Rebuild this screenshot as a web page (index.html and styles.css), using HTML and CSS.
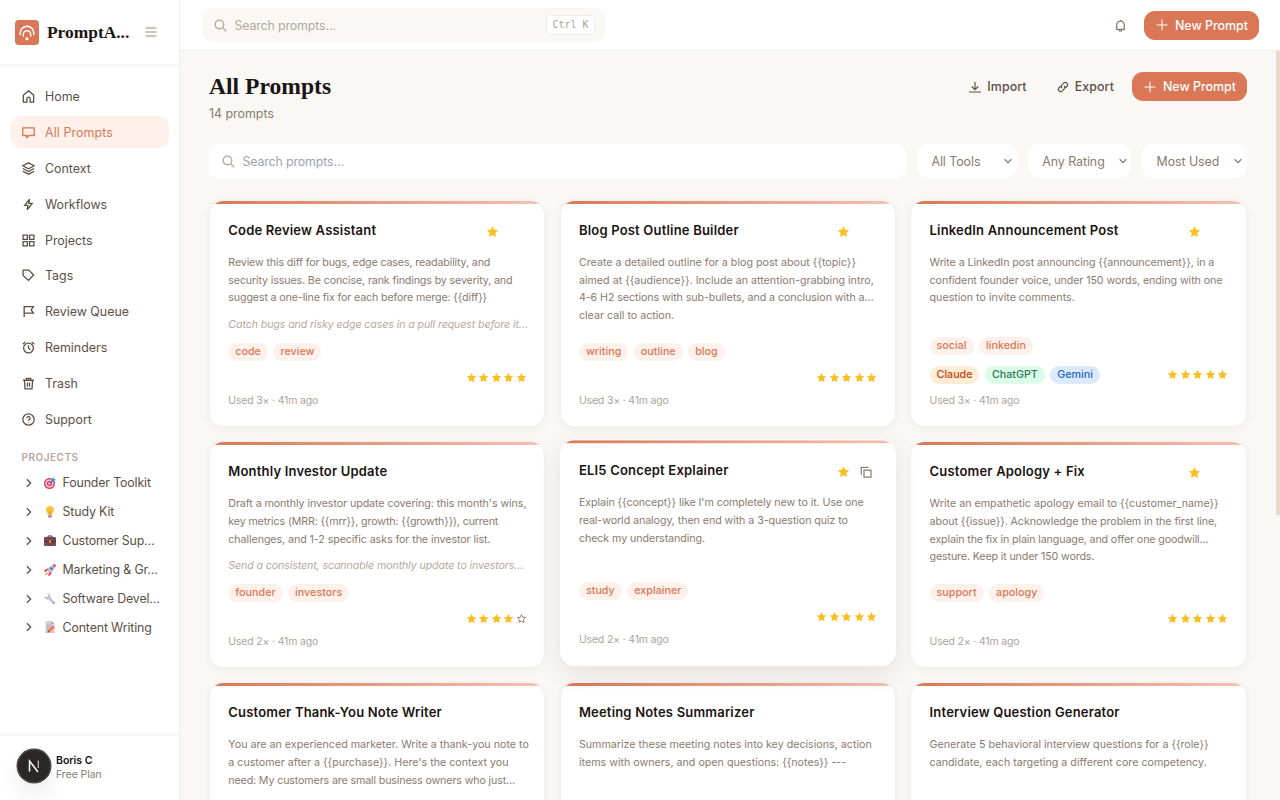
FILE: index.html
```html
<!DOCTYPE html>
<html lang="en">
<head>
<meta charset="UTF-8">
<title>All Prompts</title>
<link rel="stylesheet" href="styles.css">
</head>
<body>
<svg class="sprite">
<symbol id="home" viewBox="0 0 24 24"><path d="M2.500 9.500 12 1.500l9.500 8V22.500h-6.500v-6.300a3 3 0 0 0-6 0v6.300H2.500z"/></symbol>
<symbol id="chat" viewBox="0 0 24 24"><path d="M1.500 3.500h21v14h-9.500L9 21.500v-4H1.500z"/></symbol>
<symbol id="layers" viewBox="0 0 24 24"><path d="M12 1.500 22.500 7 12 12.500 1.500 7zM1.500 12 12 17.500 22.500 12M1.500 17 12 22.500 22.500 17"/></symbol>
<symbol id="bolt" viewBox="0 0 24 24"><path d="M14 2 5 13.500h6L9.500 22l9.500-12h-6.500z"/></symbol>
<symbol id="grid" viewBox="0 0 24 24"><path d="M2 2h8v8H2zM14 2h8v8h-8zM2 14h8v8H2zM14 14h8v8h-8z"/></symbol>
<symbol id="tag" viewBox="0 0 24 24"><path d="M2 2h10.500l9 9-9.500 10L2 12zM7 7h.5"/></symbol>
<symbol id="flag" viewBox="0 0 24 24"><path d="M4 22V3h17l-4 6 4 6H4"/></symbol>
<symbol id="clock" viewBox="0 0 24 24"><circle cx="12" cy="13" r="9"/><path d="M12 8v5l3 3M1.500 6 6 2M22.500 6 18 2"/></symbol>
<symbol id="trash" viewBox="0 0 24 24"><path d="M2 6h20M8 6V2.500h8V6M4.500 6l1 16h13l1-16M10 10v8M14 10v8"/></symbol>
<symbol id="help" viewBox="0 0 24 24"><circle cx="12" cy="12" r="10.500"/><path d="M9 9.500a3 3 0 1 1 4.500 2.600c-1 .6-1.500 1-1.500 2M12 17v.8"/></symbol>
<symbol id="search" viewBox="0 0 24 24"><circle cx="10" cy="10" r="8"/><path d="m16 16 6.500 6.500"/></symbol>
<symbol id="right" viewBox="0 0 24 24"><path d="m7 3 9 9-9 9"/></symbol>
<symbol id="down" viewBox="0 0 24 24"><path d="m2 7 10 10L22 7"/></symbol>
<symbol id="plus" viewBox="0 0 24 24"><path d="M12 1v22M1 12h22"/></symbol>
<symbol id="menu" viewBox="0 0 24 24"><path d="M1 4h22M1 12h22M1 20h22"/></symbol>
<symbol id="bell" viewBox="0 0 24 24"><path d="M3.500 19h17M5 19v-8a7 7 0 0 1 14 0v8M12 1.500V4M9 19.500a3 3 0 0 0 6 0"/></symbol>
<symbol id="import" viewBox="0 0 24 24"><path d="M12 2v15M5.500 11l6.500 6.500 6.500-6.500M0 22h24"/></symbol>
<symbol id="link" viewBox="0 0 24 24"><path d="M10 14a4.500 4.500 0 0 1 0-6.300l4-4a4.500 4.500 0 0 1 6.300 6.300L17 13.500M14 10a4.500 4.500 0 0 1 0 6.300l-4 4A4.500 4.500 0 0 1 3.700 14L7 10.500"/></symbol>
<symbol id="copy" viewBox="0 0 24 24"><path d="M8 8h14v14H8zM2.500 17V2.500H17"/></symbol>
<symbol id="star" viewBox="0 0 24 24"><path d="m12 1.800 3.200 6.800 7.300.9-5.400 5.100 1.400 7.400L12 18.400 5.500 22l1.400-7.400L1.500 9.500l7.300-.9z"/></symbol>
<symbol id="star-empty" viewBox="0 0 24 24"><path d="m12 3.500 2.600 5.700 6.300.8-4.600 4.300 1.200 6.200L12 17.500l-5.500 3 1.200-6.200L3.100 10l6.300-.8z"/></symbol>
</svg>

<div class="app">
<aside class="sidebar">
<div class="brand">
<svg class="logo" viewBox="0 0 24 25"><rect width="24" height="25" rx="4" fill="#da7756"/><path d="M5.200 14.500v-1.500a6.800 6.800 0 0 1 13.600 0v1.500M8.300 16v-1.500a3.700 3.700 0 0 1 7.400 0V16" fill="none" stroke="#fff" stroke-width="1.500" stroke-linecap="round"/><circle cx="12" cy="18.800" r="1.500" fill="#fff"/></svg>
<span class="brand-name">PromptA...</span>
<svg class="icon menu"><use href="#menu"/></svg>
</div>
<nav class="nav">
<a class="nav-item"><svg class="icon"><use href="#home"/></svg>Home</a>
<a class="nav-item active"><svg class="icon"><use href="#chat"/></svg>All Prompts</a>
<a class="nav-item"><svg class="icon"><use href="#layers"/></svg>Context</a>
<a class="nav-item"><svg class="icon"><use href="#bolt"/></svg>Workflows</a>
<a class="nav-item"><svg class="icon"><use href="#grid"/></svg>Projects</a>
<a class="nav-item"><svg class="icon"><use href="#tag"/></svg>Tags</a>
<a class="nav-item"><svg class="icon"><use href="#flag"/></svg>Review Queue</a>
<a class="nav-item"><svg class="icon"><use href="#clock"/></svg>Reminders</a>
<a class="nav-item"><svg class="icon"><use href="#trash"/></svg>Trash</a>
<a class="nav-item"><svg class="icon"><use href="#help"/></svg>Support</a>
</nav>
<div class="projects">
<div class="projects-label">PROJECTS</div>
<a class="project"><svg class="icon chevron"><use href="#right"/></svg><svg class="emoji" viewBox="0 0 24 24"><circle cx="11" cy="13" r="11" fill="#e6395f"/><circle cx="11" cy="13" r="8" fill="#f5dce4"/><circle cx="11" cy="13" r="5.500" fill="#e6395f"/><circle cx="11" cy="13" r="2.500" fill="#f5dce4"/><path d="m11 13 7-7" stroke="#256fb5" stroke-width="2"/><path d="m14 6 5-6 1 4 4 1-6 5h-4z" fill="#3b9bea"/></svg>Founder Toolkit</a>
<a class="project"><svg class="icon chevron"><use href="#right"/></svg><svg class="emoji" viewBox="0 0 24 24"><path d="M12 0a8 8 0 0 0-8 8c0 4 4 6 4 10h8c0-4 4-6 4-10a8 8 0 0 0-8-8z" fill="#fdc43f"/><path d="M9 9l3 2 3-2-2 9h-2z" fill="#f49b2c"/><path d="M8 18h8v3l-2 3h-4l-2-3z" fill="#a8a3b0"/></svg>Study Kit</a>
<a class="project"><svg class="icon chevron"><use href="#right"/></svg><svg class="emoji" viewBox="0 0 24 24"><path d="M8 5V2h8v3" fill="none" stroke="#4e3038" stroke-width="2"/><rect y="4" width="24" height="18" rx="2" fill="#79474f"/><path d="M0 12h24v2H0z" fill="#563039"/><rect x="10" y="11" width="4" height="4" fill="#f2a640"/></svg>Customer Sup…</a>
<a class="project"><svg class="icon chevron"><use href="#right"/></svg><svg class="emoji" viewBox="0 0 24 24"><path d="m9 8-7 3-2 5 7-2zM16 15l-3 7-5 2 2-7z" fill="#e6395f"/><path d="M6 13C9 6 15 1 23 1c0 8-5 14-12 17z" fill="#c5bdcf"/><path d="M17 2q3-2 6-1 1 3-1 6z" fill="#e6395f"/><circle cx="15" cy="9" r="2.500" fill="#247fcd"/><path d="m5 16-4 7 7-4z" fill="#f99840"/></svg>Marketing &amp; Gr…</a>
<a class="project"><svg class="icon chevron"><use href="#right"/></svg><svg class="emoji" viewBox="0 0 24 24"><path d="M2 5 5 8l3-1 1-3-3-3c5-1 9 3 7 8l9 9a3 3 0 0 1-4 4l-9-9C4 14 0 10 2 5z" fill="#c9c1d1"/><circle cx="19.500" cy="20" r="1.300" fill="#857b90"/></svg>Software Devel…</a>
<a class="project"><svg class="icon chevron"><use href="#right"/></svg><svg class="emoji" viewBox="0 0 24 24"><path d="M3 0h12l6 6v18H3z" fill="#d4cbe0"/><path d="M15 0v6h6z" fill="#a69bb5"/><path d="M6 8h9M6 12h9M6 16h4" stroke="#a69bb5" stroke-width="1.500"/><path d="m8 18 10-9 4 4-10 9-5 1z" fill="#f47b45"/><path d="m8 18-1 5 5-1z" fill="#a74555"/></svg>Content Writing</a>
</div>
<div class="account">
<svg class="avatar" viewBox="0 0 36 36"><circle cx="18" cy="18" r="17.500" fill="#292827"/><circle cx="18" cy="18" r="16.500" fill="none" stroke="#555250"/><path d="M13.500 23.500V13L22 24" fill="none" stroke="#fff" stroke-width="1.500"/><path d="M22.300 12.500v7.500" stroke="#bbb" stroke-width="1.300"/></svg>
<div class="account-text"><div class="account-name">Boris C</div><div class="account-plan">Free Plan</div></div>
</div>
</aside>

<div class="main">
<header class="topbar">
<div class="top-search"><svg class="icon"><use href="#search"/></svg><span>Search prompts…</span><kbd>Ctrl K</kbd></div>
<div class="top-actions"><svg class="icon bell"><use href="#bell"/></svg><button class="primary"><svg class="icon"><use href="#plus"/></svg>New Prompt</button></div>
</header>
<main class="content">
<div class="heading">
<div><h1>All Prompts</h1><p>14 prompts</p></div>
<div class="heading-actions">
<button class="ghost"><svg class="icon"><use href="#import"/></svg>Import</button>
<button class="ghost"><svg class="icon"><use href="#link"/></svg>Export</button>
<button class="primary"><svg class="icon"><use href="#plus"/></svg>New Prompt</button>
</div>
</div>
<div class="filters">
<div class="filter-search"><svg class="icon"><use href="#search"/></svg><span>Search prompts…</span></div>
<button class="select tools-select">All Tools<svg class="icon"><use href="#down"/></svg></button>
<button class="select rating-select">Any Rating<svg class="icon"><use href="#down"/></svg></button>
<button class="select sort-select">Most Used<svg class="icon"><use href="#down"/></svg></button>
</div>

<div class="cards">
<article class="card">
<div class="card-head"><h2>Code Review Assistant</h2><svg class="fav"><use href="#star"/></svg></div>
<p class="desc tighter">Review this diff for bugs, edge cases, readability, and<br>security issues. Be concise, rank findings by severity, and<br>suggest a one-line fix for each before merge: {{diff}}</p>
<p class="note">Catch bugs and risky edge cases in a pull request before it…</p>
<div class="tags"><span>code</span><span>review</span></div>
<div class="meta"><div class="stars"><svg><use href="#star"/></svg><svg><use href="#star"/></svg><svg><use href="#star"/></svg><svg><use href="#star"/></svg><svg><use href="#star"/></svg></div></div>
<div class="used">Used 3× · 41m ago</div>
</article>

<article class="card">
<div class="card-head"><h2>Blog Post Outline Builder</h2><svg class="fav"><use href="#star"/></svg></div>
<p class="desc">Create a detailed outline for a blog post about {{topic}}<br>aimed at {{audience}}. Include an attention-grabbing intro,<br><span class="tight">4-6 H2 sections with sub-bullets, and a conclusion with a…</span><br>clear call to action.</p>
<div class="tags"><span>writing</span><span>outline</span><span>blog</span></div>
<div class="meta"><div class="stars"><svg><use href="#star"/></svg><svg><use href="#star"/></svg><svg><use href="#star"/></svg><svg><use href="#star"/></svg><svg><use href="#star"/></svg></div></div>
<div class="used">Used 3× · 41m ago</div>
</article>

<article class="card">
<div class="card-head"><h2>LinkedIn Announcement Post</h2><svg class="fav"><use href="#star"/></svg></div>
<p class="desc"><span class="tight">Write a LinkedIn post announcing {{announcement}}, in a</span><br><span class="tight">confident founder voice, under 150 words, ending with one</span><br>question to invite comments.</p>
<div class="tags"><span>social</span><span>linkedin</span></div>
<div class="meta"><span class="tool claude">Claude</span><span class="tool chatgpt">ChatGPT</span><span class="tool gemini">Gemini</span><div class="stars"><svg><use href="#star"/></svg><svg><use href="#star"/></svg><svg><use href="#star"/></svg><svg><use href="#star"/></svg><svg><use href="#star"/></svg></div></div>
<div class="used">Used 3× · 41m ago</div>
</article>

<article class="card">
<div class="card-head"><h2>Monthly Investor Update</h2></div>
<p class="desc tight">Draft a monthly investor update covering: this month's wins,<br><span class="tighter">key metrics (MRR: {{mrr}}, growth: {{growth}}), current</span><br>challenges, and 1-2 specific asks for the investor list.</p>
<p class="note">Send a consistent, scannable monthly update to investors…</p>
<div class="tags"><span>founder</span><span>investors</span></div>
<div class="meta"><div class="stars"><svg><use href="#star"/></svg><svg><use href="#star"/></svg><svg><use href="#star"/></svg><svg><use href="#star"/></svg><svg class="empty"><use href="#star-empty"/></svg></div></div>
<div class="used">Used 2× · 41m ago</div>
</article>

<article class="card hovered">
<div class="card-head"><h2>ELI5 Concept Explainer</h2><svg class="fav"><use href="#star"/></svg><svg class="icon copy"><use href="#copy"/></svg></div>
<p class="desc tight">Explain {{concept}} like I'm completely new to it. Use one<br>real-world analogy, then end with a 3-question quiz to<br>check my understanding.</p>
<div class="tags"><span>study</span><span>explainer</span></div>
<div class="meta"><div class="stars"><svg><use href="#star"/></svg><svg><use href="#star"/></svg><svg><use href="#star"/></svg><svg><use href="#star"/></svg><svg><use href="#star"/></svg></div></div>
<div class="used">Used 2× · 41m ago</div>
</article>

<article class="card">
<div class="card-head"><h2>Customer Apology + Fix</h2><svg class="fav"><use href="#star"/></svg></div>
<p class="desc">Write an empathetic apology email to {{customer_name}}<br><span class="tight">about {{issue}}. Acknowledge the problem in the first line,</span><br><span class="tighter">explain the fix in plain language, and offer one goodwill…</span><br><span class="tighter">gesture. Keep it under 150 words.</span></p>
<div class="tags"><span>support</span><span>apology</span></div>
<div class="meta"><div class="stars"><svg><use href="#star"/></svg><svg><use href="#star"/></svg><svg><use href="#star"/></svg><svg><use href="#star"/></svg><svg><use href="#star"/></svg></div></div>
<div class="used">Used 2× · 41m ago</div>
</article>

<article class="card">
<div class="card-head"><h2>Customer Thank-You Note Writer</h2></div>
<p class="desc">You are an experienced marketer. Write a thank-you note to<br>a customer after a {{purchase}}. Here's the context you<br><span class="tighter">need: My customers are small business owners who just…</span></p>
</article>

<article class="card">
<div class="card-head"><h2>Meeting Notes Summarizer</h2></div>
<p class="desc">Summarize these meeting notes into key decisions, action<br>items with owners, and open questions: {{notes}} ---</p>
</article>

<article class="card">
<div class="card-head"><h2>Interview Question Generator</h2></div>
<p class="desc">Generate 5 behavioral interview questions for a {{role}}<br>candidate, each targeting a different core competency.</p>
</article>
</div>
<div class="scrollbar"></div>
</main>
</div>
</div>
</body>
</html>
```
FILE: styles.css
```css
* {
box-sizing: border-box;
}

body {
margin: 0;
font-family: Inter, "Liberation Sans", sans-serif;
font-size: 12.4px;
color: #5c4f46;
background: #faf8f5;
}

h1, h2, p {
margin: 0;
}

button {
border: 0;
font: inherit;
letter-spacing: inherit;
color: inherit;
background: none;
}

.sprite {
display: none;
}

.icon {
flex: none;
width: 13px;
height: 13px;
fill: none;
stroke: currentColor;
stroke-width: 2.4;
}

.app {
display: flex;
height: 800px;
overflow: hidden;
}

/* Sidebar */
.sidebar {
display: flex;
flex-direction: column;
flex: none;
width: 180px;
background: #fff;
border-right: 1px solid #f1efed;
}

.brand {
display: flex;
align-items: center;
height: 66px;
padding: 0 22.500px 0 15px;
border-bottom: 2px solid #f6f6f5;
}

.logo {
width: 24px;
height: 25px;
}

.brand-name {
margin-left: 8px;
font-family: "Liberation Serif", serif;
font-size: 17.400px;
font-weight: bold;
color: #1a1412;
}

.menu {
margin-left: auto;
width: 12px;
height: 12px;
color: #9d8678;
}

.nav {
display: flex;
flex-direction: column;
gap: 3.9px;
padding: 14.500px 10px 0 11px;
}

.nav-item {
display: flex;
align-items: center;
gap: 10px;
height: 32px;
padding: 0 11px;
border-radius: 11px;
}

.nav-item.active {
letter-spacing: .1px;
color: #da7756;
background: #fef0eb;
}

.projects {
padding: 15px 20px 0 21.500px;
}

.projects-label {
height: 18px;
line-height: 12px;
font-size: 10px;
font-weight: 600;
letter-spacing: .500px;
color: #b8a79b;
}

.project {
display: flex;
align-items: center;
height: 28.9px;
letter-spacing: -.150px;
white-space: nowrap;
}

.chevron {
width: 10px;
height: 10px;
margin: 0 10.500px 0 2px;
stroke-width: 3;
}

.emoji {
flex: none;
width: 12px;
height: 12px;
margin-right: 6.500px;
}

.account {
display: flex;
align-items: center;
gap: 4px;
height: 66px;
margin-top: auto;
padding: 0 0 4px 16px;
border-top: 2px solid #f6f6f5;
}

.account-text {
padding-top: 4px;
}

.avatar {
width: 36px;
height: 36px;
border-radius: 50%;
box-shadow: 0 12px 20px rgba(0, 0, 0, .07);
}

.account-name {
font-size: 10.500px;
line-height: 14px;
font-weight: 600;
color: #1a1412;
}

.account-plan {
font-size: 10.400px;
line-height: 14px;
color: #8b7a6e;
}

/* Top bar */
.main {
flex: 1;
min-width: 0;
}

.topbar {
display: flex;
align-items: center;
justify-content: space-between;
height: 51px;
padding: 0 21.500px;
background: #fff;
border-bottom: 1px solid #f0eeec;
}

.top-search {
display: flex;
align-items: center;
gap: 8px;
width: 403px;
height: 34px;
padding: 0 10px 0 12px;
border-radius: 11px;
color: #b8a79b;
background: #faf8f5;
}

kbd {
margin-left: auto;
height: 20px;
padding: 0 5px;
border: 1px solid #eeecea;
border-radius: 5px;
font: 10px/18px "DejaVu Sans Mono", monospace;
color: #b0a198;
background: #fff;
}

.top-actions, .heading-actions {
display: flex;
align-items: center;
}

.bell {
margin-right: 17px;
color: #8b7a6e;
}

.primary {
display: flex;
align-items: center;
gap: 7px;
width: 114.500px;
height: 29px;
padding: 0 12px;
border-radius: 11px;
white-space: nowrap;
font-weight: 500;
color: #fff;
background: #da7756;
}

.primary .icon {
width: 12px;
height: 12px;
stroke-width: 2;
}

/* Page heading and filters */
.content {
position: relative;
height: 749px;
padding: 21px 33.500px 0 29px;
overflow: hidden;
}

.heading {
display: flex;
justify-content: space-between;
align-items: flex-start;
height: 72px;
}

h1 {
font-family: "Liberation Serif", serif;
font-size: 23.600px;
line-height: 29px;
color: #1a1412;
}

.heading p {
margin-top: 5px;
line-height: 16px;
color: #8b7a6e;
}

.ghost {
display: flex;
align-items: center;
gap: 6px;
height: 29px;
margin-right: 18px;
padding: 0 0 0 12px;
font-weight: 500;
letter-spacing: .1px;
}

.ghost .icon {
width: 12px;
height: 12px;
}

.filters {
display: flex;
height: 35px;
gap: 10.800px;
}

.filter-search {
display: flex;
flex: 1;
align-items: center;
gap: 8px;
padding-left: 12.500px;
border-radius: 11px;
color: #9ca3af;
background: #fff;
}

.filter-search .icon {
color: #b8a79b;
}

.top-search span, .filter-search span {
letter-spacing: -.150px;
}

.select {
display: flex;
justify-content: space-between;
align-items: center;
height: 34px;
padding: 0 4.500px 0 14.500px;
border-radius: 11px;
white-space: nowrap;
letter-spacing: -.050px;
color: #8b7a6e;
background: #fff;
}

.select .icon {
width: 8px;
height: 8px;
stroke-width: 4;
}

.tools-select {
width: 100px;
}

.rating-select {
width: 103.500px;
}

.sort-select {
width: 104.500px;
}

/* Prompt cards */
.cards {
display: grid;
grid-template-columns: repeat(3, 1fr);
grid-auto-rows: 226.800px;
gap: 14.400px;
margin-top: 21px;
}

.card {
position: relative;
display: flex;
flex-direction: column;
padding: 20px 17.500px 16.500px 18.300px;
border: 1px solid #f3f1ee;
border-radius: 14.400px;
overflow: hidden;
white-space: nowrap;
background: #fff;
box-shadow: 0 2px 8px rgba(40, 30, 20, .05);
}

.card::before {
content: "";
position: absolute;
top: 0;
left: 0;
right: 0;
height: 3px;
background: linear-gradient(90deg, #da7756, #f2c2b2);
}

.card.hovered {
z-index: 1;
transform: translateY(-1.800px);
border-color: #fff;
box-shadow: 0 8px 24px rgba(40, 30, 20, .1);
}

.card-head {
display: flex;
align-items: center;
height: 18px;
}

.hovered .card-head {
height: 19px;
}

h2 {
flex: 1;
font-size: 13px;
font-weight: 600;
letter-spacing: .190px;
color: #1a1412;
}

.fav {
width: 13px;
height: 13px;
margin: 3px 27.500px 0 0;
fill: #fbbf24;
}

.copy {
width: 12px;
height: 12px;
margin-top: 4px;
margin-right: 5px;
color: #8b7a6e;
}

.hovered .fav {
margin-right: 10.500px;
}

.desc {
margin-top: 14.900px;
font-size: 10.700px;
line-height: 17.800px;
color: #8b7a6e;
}

.tight {
letter-spacing: -.080px;
}

.tighter {
letter-spacing: -.140px;
}

.note {
margin-top: 9.500px;
font-size: 10.700px;
line-height: 16px;
font-style: italic;
letter-spacing: -.130px;
color: #b8a79b;
}

.tags {
display: flex;
gap: 5.500px;
margin-top: auto;
}

.tags span, .tool {
height: 18px;
padding: 0 7px;
border-radius: 9px;
font-size: 10.700px;
line-height: 18px;
font-weight: 500;
color: #da7756;
background: #fef0eb;
}

.tags span {
letter-spacing: .030px;
}

.meta {
display: flex;
align-items: center;
gap: 5.500px;
margin-top: 11px;
}

.tool.claude {
color: #c2410c;
background: #ffedd5;
}

.tool.chatgpt {
color: #28795a;
background: #dcfce7;
}

.tool.gemini {
color: #2563c4;
background: #dbeafe;
}

.stars {
display: flex;
gap: 1.500px;
height: 12px;
margin-left: auto;
}

.stars svg {
width: 11px;
height: 11px;
fill: #fbbf24;
}

.stars .empty {
fill: none;
stroke: #8b7a6e;
stroke-width: 2;
}

.used {
margin-top: 9.500px;
font-size: 10.500px;
line-height: 16px;
letter-spacing: -.180px;
color: #b0a198;
}

.scrollbar {
position: absolute;
top: 0;
right: 0;
width: 4px;
height: 464px;
background: #e8d9c9;
}
```
